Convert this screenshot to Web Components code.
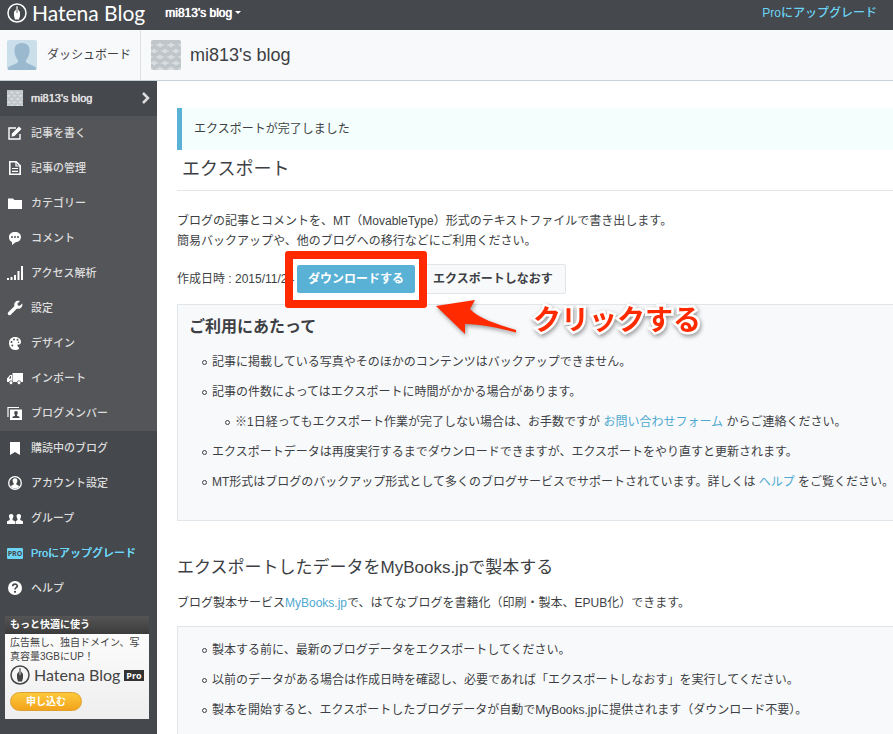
<!DOCTYPE html>
<html lang="ja">

<head>
    <meta charset="utf-8">
    <title>エクスポート - mi813's blog</title>
    <style>
        body {
            margin: 0;
            background: #fff;
            color: #3d3f44;
            font: 12px/20px "Liberation Sans", "Noto Sans CJK JP", sans-serif;
        }

        .layout {
            display: grid;
            grid-template-columns: 157px minmax(0, 1fr);
        }
    </style>
</head>

<body>
    <top-bar></top-bar>
    <blog-header></blog-header>
    <div class="layout">
        <side-bar>
            <side-item kind="blog" icon="blog">mi813's blog</side-item>
            <side-item kind="sub" icon="write">記事を書く</side-item>
            <side-item kind="sub" icon="entry">記事の管理</side-item>
            <side-item kind="sub" icon="folder">カテゴリー</side-item>
            <side-item kind="sub" icon="comment">コメント</side-item>
            <side-item kind="sub" icon="bars">アクセス解析</side-item>
            <side-item kind="sub" icon="wrench">設定</side-item>
            <side-item kind="sub" icon="palette">デザイン</side-item>
            <side-item kind="sub" icon="truck">インポート</side-item>
            <side-item kind="sub" icon="member">ブログメンバー</side-item>
            <side-item icon="bookmark">購読中のブログ</side-item>
            <side-item icon="account">アカウント設定</side-item>
            <side-item icon="group">グループ</side-item>
            <side-item kind="pro" icon="pro">Proにアップグレード</side-item>
            <side-item icon="help">ヘルプ</side-item>
            <pro-ad slot="ad"></pro-ad>
        </side-bar>
        <export-page></export-page>
    </div>

    <script>
        // shared drawings
        const nib = `<svg viewBox="0 0 20 20" width="20" height="20" fill="none" aria-hidden="true"><circle cx="10" cy="10" r="9" stroke="currentColor" stroke-width="1.5"/><path d="M9 3.500h2v3l2 2.500v4l-1 3.500H8L7 13V9l2-2.500z" fill="currentColor"/><path d="M10 4v6" stroke="var(--nib-bg)" stroke-width=".8"/></svg>`;

        function blogIcon(size) {
            let waves = '';
            for (let row = 0; row < 5; row++) {
                for (let col = 0; col < 4; col++) {
                    const x = col * 11 - (row % 2 ? 2 : 7), y = 5 + row * 6;
                    waves += `<path d="M${x} ${y}q3 -.5 5 -2.500q2 2 5 2.500q-3 .5 -5 2.500q-2 -2 -5 -2.500z"/>`;
                }
            }
            return `<svg viewBox="0 0 30 30" width="${size}" height="${size}" style="border-radius:2px" aria-hidden="true"><rect width="30" height="30" fill="#bfc6ca"/><g fill="#d8dde0">${waves}</g></svg>`;
        }

        const icons = {
            blog: blogIcon(16),
            write: '<path d="M9 3H2v11h11V9" fill="none" stroke="#fff" stroke-width="1.400"/><path d="M5 8.500L12 1.500l2.500 2.500-7 7-3 .7z" fill="#fff"/>',
            entry: '<path d="M2.800 1.800h6.400l4 4v8.400H2.800z" fill="none" stroke="#fff" stroke-width="1.600"/><path d="M9 2v4h4M5 8.500h6M5 11.300h6" fill="none" stroke="#fff" stroke-width="1.200"/>',
            folder: '<path d="M1 3.500h5l1.500 1.500H15v9H1z" fill="#fff"/>',
            comment: '<path d="M8 2c3.500 0 6 2 6 5s-2.500 5-5 5l-4 3v-3c-2-.5-3-2.500-3-5 0-3 2.500-5 6-5z" fill="#fff"/><g fill="#535458"><circle cx="5" cy="7" r="1"/><circle cx="8" cy="7" r="1"/><circle cx="11" cy="7" r="1"/></g>',
            bars: '<path d="M0 13h2v2H0zM3.500 12h2v3h-2zM7 10h2v5H7zM10.500 6h2v9h-2zM14 1h2v14h-2z" fill="#fff"/>',
            wrench: '<path d="M2.500 13.500L9 7" stroke="#fff" stroke-width="3.500" stroke-linecap="round"/><path d="M13 1L10.500 3.500l.3 2 2 .3L15.300 3.500c.6 3.500-2 5.800-5 5.200l-3-3C6.700 2.500 9.500.2 13 1z" fill="#fff"/>',
            palette: '<path d="M8 2c4 0 6 2.500 6 5 0 2-1.200 2.500-2.500 2.500-2 0-1 2 .2 3C13 14 11 15 8.500 15 4 15 2 11.500 2 8c0-3.500 2.500-6 6-6z" fill="#fff"/><g fill="#535458"><circle cx="4.500" cy="7" r="1"/><circle cx="7" cy="4.500" r="1"/><circle cx="10.500" cy="4.800" r="1"/><circle cx="5.300" cy="10.500" r="1"/><circle cx="11.500" cy="7.200" r=".8"/></g>',
            truck: '<path d="M5.500 3H16v9H5.500zM5 5H3L0 8.500V12h5z" fill="#fff"/><path d="M1.800 8.500L3.500 6H4v2.500z" fill="#535458"/><g fill="#fff" stroke="#535458" stroke-width=".8"><circle cx="4" cy="12.700" r="1.900"/><circle cx="12" cy="12.700" r="1.900"/></g>',
            member: '<path d="M1 12V2.500h11" fill="none" stroke="#fff" stroke-width="1.200"/><path d="M3 4.500h12V15H3z" fill="#fff"/><path d="M9 6c1.500 0 2 1 1.700 2.500L10 10v.8l2.500.9V13h-7v-1.300l2.500-.9V10l-.7-1.500C7 7 7.500 6 9 6z" fill="#45484c"/>',
            bookmark: '<path d="M3 2h10v13l-5-3-5 3z" fill="#fff"/>',
            account: '<circle cx="8" cy="8" r="6.300" fill="none" stroke="#fff" stroke-width="1.300"/><path d="M8 3.300c2 0 2.700 1.400 2.300 3.200L9.300 8.700v.8l3 1.500C11 13 9.800 13.500 8 13.500S5 13 3.700 11l3-1.500v-.8L5.700 6.500C5.300 4.700 6 3.300 8 3.300z" fill="#fff"/>',
            group: '<path d="M4.200 4c2 0 2.500 1.400 2.200 3L5.500 9v1L8 11.200V14H0v-2.800L2.800 10V9L2 7c-.3-1.600.2-3 2.200-3zM11.800 4c2 0 2.500 1.400 2.200 3L13.200 9v1L16 11.200V14H8.600v-2.800L10.500 10V9L9.600 7c-.3-1.600.2-3 2.200-3z" fill="#fff"/>',
            pro: '<rect y="3" width="16" height="11" rx="1" fill="#6cd5f5"/><text x="8" y="11" text-anchor="middle" font-family="Open Sans" font-size="7" font-weight="700" fill="#45484c">PRO</text>',
            help: '<circle cx="8" cy="8" r="7" fill="#fff"/><path d="M5.700 6.300c0-3 4.700-2.800 4.600-.2C10.300 7.700 8 7.600 8 9.500" fill="none" stroke="#45484c" stroke-width="1.700"/><circle cx="8" cy="11.800" r="1.100" fill="#45484c"/>'
        };

        function define(name, render) {
            customElements.define(name, class extends HTMLElement {
                constructor() {
                    super();
                    this.attachShadow({ mode: 'open' });
                }
                connectedCallback() {
                    this.shadowRoot.innerHTML = render(this);
                }
            });
        }

        define('hatena-logo', () => `
            <style>
                :host { display: flex; align-items: center; gap: 5px; white-space: nowrap; font: var(--logo-size, 21px)/22px Lato, sans-serif; }
                svg { flex: none; }
            </style>
            ${nib}<span>Hatena Blog</span><slot></slot>`);

        define('top-bar', () => `
            <style>
                :host { display: flex; box-sizing: border-box; height: 30px; padding: 0 16px 5px 7px; align-items: center; background: #45484d; color: #fff; --nib-bg: #45484d; }
                button { display: flex; align-items: center; gap: 3px; margin-left: 20px; padding: 0; border: 0; background: none; color: #fff; font: 12px/20px "Liberation Sans", sans-serif; text-shadow: 0 0 currentColor, 0 0 1px currentColor; }
                button::after { content: ""; border: 3px solid transparent; border-top-color: #fff; border-bottom: 0; }
                .pro { margin-left: auto; color: #6cd5f5; font-weight: 500; text-decoration: none; }
            </style>
            <hatena-logo></hatena-logo>
            <button type="button">mi813's blog</button>
            <a class="pro" href="#pro">Proにアップグレード</a>`);

        define('blog-header', () => `
            <style>
                :host { display: flex; height: 50px; background: #f8f9fb; border-bottom: 1px solid #c6d1d8; }
                a { display: flex; align-items: center; gap: 10px; padding: 0 9px 0 7px; border-right: 1px solid #dfe3e7; color: inherit; text-decoration: none; }
                h1 { display: flex; align-items: center; gap: 9px; margin: 0; padding-left: 10px; font-size: 18px; font-weight: normal; }
            </style>
            <a href="#dashboard"><svg width="30" height="30" viewBox="0 0 30 30" style="border-radius:2px" aria-hidden="true"><rect width="30" height="30" fill="#cbdfeb"/><path d="M15 3c5.500 0 8 3.500 7.500 8.500-.3 4-1.800 6.500-3.500 8.500v2c1 2 7 3 10 5.500V30H1v-2.500C4 25 10 24 11 22v-2c-1.700-2-3.200-4.500-3.500-8.500C7 6.500 9.500 3 15 3z" fill="#9ab9cf"/></svg>ダッシュボード</a>
            <h1>${blogIcon(30)}mi813's blog</h1>`);

        define('side-bar', () => `
            <style>
                :host { display: block; background: #45484c; color: #ddd; }
                .ad { padding: 10px 8px 16px 5px; }
            </style>
            <nav><slot></slot></nav>
            <div class="ad"><slot name="ad"></slot></div>`);

        define('side-item', el => `
            <style>
                :host { display: block; font-size: 11px; font-weight: 500; }
                :host([kind=sub]) { background: #545559; }
                :host([kind=blog]) { text-shadow: 0 0 currentColor, 0 0 1px currentColor; }
                :host([kind=pro]) { color: #6cd5f5; text-shadow: 0 0 currentColor; }
                a { display: flex; box-sizing: border-box; align-items: center; gap: 8px; height: 35px; padding: 0 7px 2px; color: inherit; text-decoration: none; }
                .arrow { margin-left: auto; }
            </style>
            <a href="#${el.getAttribute('icon')}">
                <svg width="16" height="16" viewBox="0 0 16 16" aria-hidden="true">${icons[el.getAttribute('icon')]}</svg>
                <slot></slot>
                ${el.getAttribute('kind') === 'blog' ? '<svg class="arrow" width="8" height="14" viewBox="0 0 8 14" aria-hidden="true"><path d="M1 2l5 5-5 5" fill="none" stroke="#ddd" stroke-width="2.500"/></svg>' : ''}
            </a>`);

        define('pro-ad', () => `
            <style>
                :host { display: block; background: linear-gradient(#fff, #eee); color: #444; font-size: 10px; line-height: 14px; --nib-bg: #fff; --logo-size: 16px; }
                h2 { margin: 0; padding: 0 5px; background: linear-gradient(#555, #3c3c3c); color: #fff; font-size: 10px; line-height: 18px; }
                .body { padding: 2px 4px 8px 5px; }
                p { margin: 0; }
                hatena-logo { height: 22px; gap: 4px; }
                b { padding: 0 2px; background: #333; color: #fff; font: bold 9px/11px "Open Sans", sans-serif; }
                button { display: block; width: 72px; height: 19px; margin-top: 6px; padding: 0; border: 1px solid #dfa030; border-radius: 10px; background: linear-gradient(#fdc93b, #f2a31c); color: #fff; font: bold 10px/15px "Liberation Sans", "Noto Sans CJK JP", sans-serif; }
            </style>
            <h2>もっと快適に使う</h2>
            <div class="body">
                <p>広告無し、独自ドメイン、写真容量3GBにUP！</p>
                <hatena-logo><b>Pro</b></hatena-logo>
                <button type="button">申し込む</button>
            </div>`);

        // pale panel for a heading and a list
        define('note-box', () => `
            <style>
                :host { display: block; padding: 8px 0 23px 11px; background: #f8f9fb; border: 1px solid #e1e6ea; border-right: 0; white-space: nowrap; overflow: hidden; }
                ::slotted(h3) { margin: 0 0 6px; font-size: 16px; line-height: 28px; }
            </style>
            <slot></slot>`);

        // red frame, arrow and caption laid over the wrapped button
        define('click-mark', () => `
            <style>
                :host { display: block; position: relative; }
                .frame { position: absolute; inset: -14px -12px -15px -12px; border: 8px solid #ff2a00; border-radius: 3px; pointer-events: none; }
                .hint { position: absolute; left: 137px; top: 32px; display: flex; gap: 16px; filter: drop-shadow(1px 2px 2px rgba(0, 0, 0, .4)); pointer-events: none; }
                .hint span { color: #ff2a00; font-size: 28px; font-weight: bold; line-height: 48px; white-space: nowrap; -webkit-text-stroke: 5px #fff; paint-order: stroke fill; }
                svg { flex: none; }
            </style>
            <slot></slot>
            <div class="frame"></div>
            <div class="hint">
                <svg width="83" height="44" viewBox="0 0 83 44" aria-hidden="true"><path d="M2 9L41 3l-5 9c8 9 26 15 46 21v2.500C64 31 47 27 31 27v10z" fill="#ff2a00"/></svg>
                <span>クリックする</span>
            </div>`);

        define('export-page', () => `
            <style>
                :host { display: block; padding: 27px 0 0 20px; }
                a { color: #4fa9d0; text-decoration: none; }
                .notice { padding: 11px 12px; border-left: 5px solid #59b1d6; background: #f4fffd; }
                h2 { margin: 0; font-size: 18px; line-height: 28px; font-weight: normal; }
                .title { padding: 5px 5px 7px; border-bottom: 1px solid #e3e6e9; }
                p { margin: 0; }
                .lead { margin: 20px 0 13px; }
                .row { display: flex; align-items: center; gap: 5px; margin-bottom: 10px; }
                .date { width: 115px; white-space: nowrap; }
                button { box-sizing: border-box; height: 30px; padding: 0 12px; border: 1px solid #e1e6ea; border-radius: 2px; background: #f8f9fb; color: #3d3f44; font: bold 12px/20px "Liberation Sans", "Noto Sans CJK JP", sans-serif; }
                .primary { height: 28px; padding: 0 10px; border-color: #59b1d6; background: #59b1d6; color: #fff; }
                click-mark { z-index: 1; }
                .book { margin: 33px 0 11px; font-size: 17px; }
                .book + p { margin-bottom: 13px; }
                ul { margin: 0; padding-left: 23px; list-style: none; line-height: 30px; }
                li::before { content: ""; display: inline-block; width: 3px; height: 3px; margin: 0 5px 0 -10px; border: 1px solid #3d3f44; border-radius: 50%; vertical-align: 1px; }
            </style>
            <div class="notice" role="status">エクスポートが完了しました</div>
            <h2 class="title">エクスポート</h2>
            <p class="lead">ブログの記事とコメントを、MT（MovableType）形式のテキストファイルで書き出します。<br>簡易バックアップや、他のブログへの移行などにご利用ください。</p>
            <div class="row">
                <span class="date">作成日時 : 2015/11/24</span>
                <click-mark><button class="primary" type="button">ダウンロードする</button></click-mark>
                <button type="button">エクスポートしなおす</button>
            </div>
            <note-box>
                <h3>ご利用にあたって</h3>
                <ul>
                    <li>記事に掲載している写真やそのほかのコンテンツはバックアップできません。</li>
                    <li>記事の件数によってはエクスポートに時間がかかる場合があります。
                        <ul><li>※1日経ってもエクスポート作業が完了しない場合は、お手数ですが <a href="#contact">お問い合わせフォーム</a> からご連絡ください。</li></ul>
                    </li>
                    <li>エクスポートデータは再度実行するまでダウンロードできますが、エクスポートをやり直すと更新されます。</li>
                    <li>MT形式はブログのバックアップ形式として多くのブログサービスでサポートされています。詳しくは <a href="#help">ヘルプ</a> をご覧ください。</li>
                </ul>
            </note-box>
            <h2 class="book">エクスポートしたデータをMyBooks.jpで製本する</h2>
            <p>ブログ製本サービス<a href="#mybooks">MyBooks.jp</a>で、はてなブログを書籍化（印刷・製本、EPUB化）できます。</p>
            <note-box>
                <ul>
                    <li>製本する前に、最新のブログデータをエクスポートしてください。</li>
                    <li>以前のデータがある場合は作成日時を確認し、必要であれば「エクスポートしなおす」を実行してください。</li>
                    <li>製本を開始すると、エクスポートしたブログデータが自動でMyBooks.jpに提供されます（ダウンロード不要）。</li>
                </ul>
            </note-box>`);
    </script>
</body>

</html>
